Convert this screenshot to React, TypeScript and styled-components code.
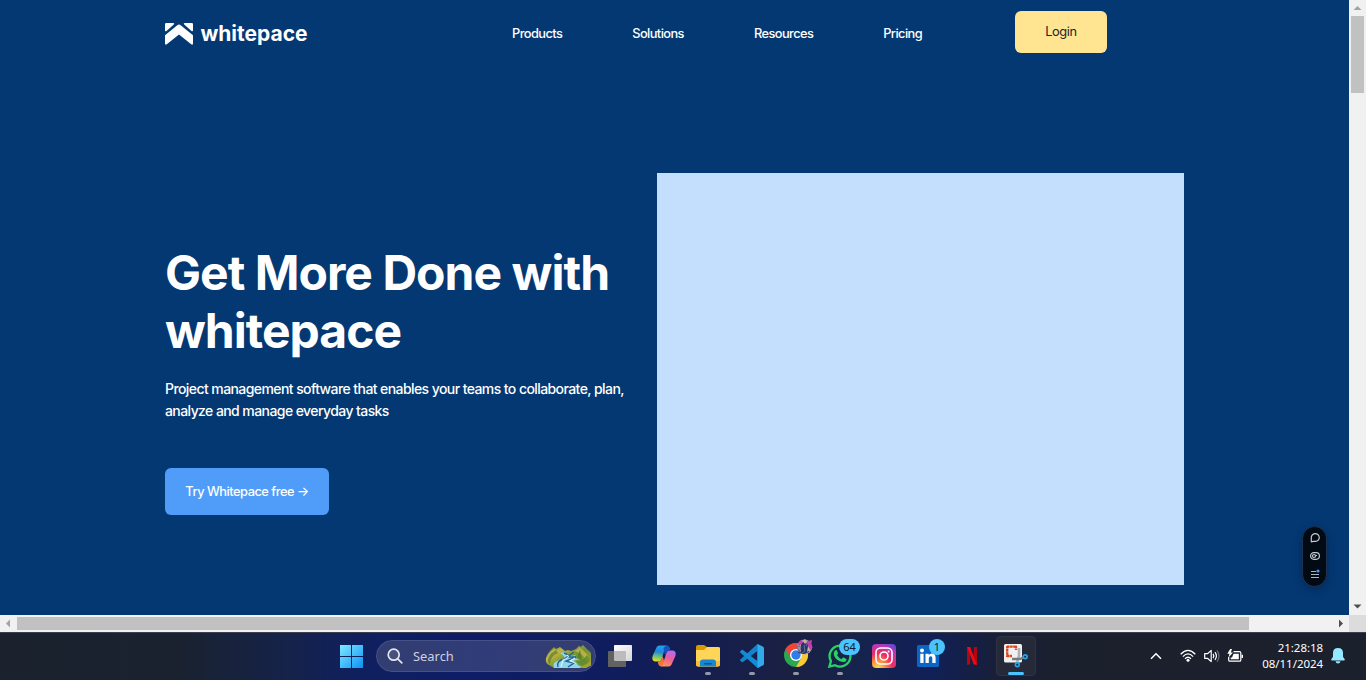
import React from "react";
import styled, { createGlobalStyle } from "styled-components";

const GlobalStyle = createGlobalStyle`
  * { box-sizing: border-box; }
  html, body { margin: 0; padding: 0; overflow: hidden; }
  body { font-family: Inter, "Liberation Sans", sans-serif; background: #043873; }
  a { color: inherit; text-decoration: none; }
  button { border: 0; padding: 0; font-family: inherit; }
  svg { display: block; }
`;

const Screen = styled.div`
  width: 1366px;
  height: 680px;
  display: flex;
  flex-direction: column;
  overflow: hidden;
`;

const Browser = styled.div`
  height: 632px;
  display: grid;
  grid-template: 615px 17px / 1349px 17px;
`;

const Page = styled.div`
  position: relative;
  background: #043873;
  color: #fff;
  padding-left: 165px;
`;

const Header = styled.header`
  height: 64px;
  display: flex;
  align-items: center;
`;

const Brand = styled.a`
  width: 347px;
  display: flex;
  align-items: center;
  gap: 7.4px;
  padding-top: 3px;
`;

const BrandName = styled.span`
  font-size: 21px;
  line-height: 26px;
  font-weight: 700;
  letter-spacing: 0;
`;

const Nav = styled.nav`
  width: 503px;
  display: flex;
  gap: 70px;
  padding-top: 4px;
  font-size: 12.8px;
  line-height: 20px;
  font-weight: 550;
  letter-spacing: -0.57px;
  white-space: nowrap;
`;

const LoginButton = styled.button`
  width: 92px;
  height: 42px;
  padding-bottom: 2px;
  border-radius: 6px;
  background: #ffe492;
  color: #212529;
  font-size: 12.8px;
  letter-spacing: -0.35px;
`;

const Hero = styled.main`
  display: flex;
  padding-top: 109px;
`;

const HeroCopy = styled.section`
  width: 492px;
  padding-top: 71px;
`;

const Title = styled.h1`
  margin: 0;
  font-size: 48px;
  line-height: 58px;
  font-weight: 700;
  letter-spacing: -0.96px;
`;

const Lead = styled.p`
  margin: 18px 0 0;
  font-size: 14px;
  line-height: 22px;
  font-weight: 550;
  letter-spacing: -0.58px;
  white-space: nowrap;
`;

const TryButton = styled.button`
  width: 164px;
  height: 47px;
  margin-top: 46px;
  border-radius: 6px;
  background: #4f9cf9;
  color: #fff;
  font-size: 12.8px;
  font-weight: 550;
  letter-spacing: -0.48px;
  white-space: nowrap;
`;

const HeroImage = styled.div`
  width: 527px;
  height: 412px;
  background: #c4defd;
`;

const Toolbox = styled.aside`
  position: absolute;
  right: 22px;
  top: 526px;
  width: 25px;
  height: 61px;
  padding-top: 5px;
  border: 1px solid #1c3252;
  border-radius: 13px;
  background: #020a14;
  box-shadow: 0 3px 10px rgba(0, 0, 0, 0.25);
  display: flex;
  flex-direction: column;
  align-items: center;
  gap: 6px;
`;

const VerticalBar = styled.div`
  background: #f1f1f1;
  display: flex;
  flex-direction: column;
  align-items: center;
  justify-content: space-between;
`;

const VerticalTrack = styled.div`
  flex: 1;
  width: 13px;
  margin-top: -1px;
`;

const VerticalThumb = styled.div`
  height: 77px;
  background: #c1c1c1;
`;

const HorizontalBar = styled.div`
  background: #f1f1f1;
  display: flex;
  align-items: center;
`;

const HorizontalTrack = styled.div`
  flex: 1;
`;

const HorizontalThumb = styled.div`
  width: 1232px;
  height: 13px;
  background: #c1c1c1;
`;

const Corner = styled.div`
  background: #dcdcdc;
`;

const Taskbar = styled.footer`
  height: 48px;
  border-top: 1px solid #3b3f50;
  background: linear-gradient(90deg, #1b222e 0, #1a2230 180px, #15224a 290px, #10205d 350px, #0e1d66 460px, #0f1d60 600px, #141e51 690px, #1a2042 790px, #16234b 850px, #112057 930px, #171f3c 990px, #1b202d 1060px, #1b212c 100%);
  display: flex;
  padding-left: 329px;
  font-family: "Noto Sans", "Open Sans", sans-serif;
  color: #fff;
`;

const TaskCell = styled.div`
  position: relative;
  width: 44px;
  height: 46px;
  display: flex;
  align-items: center;
  justify-content: center;
`;

const ChromeCell = styled(TaskCell)`
  padding: 0 0 6px 8px;
`;

const ActiveCell = styled(TaskCell)`
  width: 40px;
  height: 40px;
  margin: 3px 2px 0;
  border: 1px solid #303442;
  border-radius: 4px;
  background: #262a38;
`;

const Indicator = styled.span<{ $active?: boolean }>`
  position: absolute;
  left: 50%;
  bottom: ${(p) => (p.$active ? "0" : "4px")};
  width: ${(p) => (p.$active ? "16px" : "6px")};
  height: 3px;
  border-radius: 2px;
  background: ${(p) => (p.$active ? "#4cc2ff" : "#9598aa")};
  transform: translateX(-50%);
`;

const Badge = styled.span<{ $wide?: boolean }>`
  position: absolute;
  top: 6px;
  left: ${(p) => (p.$wide ? "21px" : "23px")};
  width: ${(p) => (p.$wide ? "21px" : "16px")};
  height: 16px;
  border-radius: 8px;
  background: #4cc2ff;
  color: #10202c;
  font-size: 11px;
  line-height: 16px;
  text-align: center;
`;

const SearchPill = styled.div`
  width: 220px;
  height: 32px;
  margin: 7px 2px 0 3px;
  padding: 0 4px 0 10px;
  border: 1px solid #46518a;
  border-radius: 16px;
  background: linear-gradient(90deg, #323d70, #303c79 50%, #353e70);
  display: flex;
  align-items: center;
`;

const SearchLabel = styled.span`
  flex: 1;
  padding-left: 10px;
  font-size: 12.9px;
  color: #cdd0df;
`;

const Tray = styled.div`
  display: flex;
  align-items: center;
  width: 216px;
  height: 46px;
  margin-left: 112px;
`;

const TrayIcons = styled.div`
  width: 95px;
  display: flex;
  align-items: center;
`;

const TraySlot = styled.span<{ $width: number }>`
  width: ${(p) => p.$width}px;
  flex: none;
`;

const Clock = styled.div`
  width: 78px;
  text-align: right;
  font-size: 11.5px;
  line-height: 16px;
  letter-spacing: -0.05px;
`;

const BellSlot = styled.span`
  margin-left: 8px;
`;

const BrandMark = () => (
  <svg width="28" height="22" viewBox="0 0 28 22" fill="#fff">
    <path d="M1.200 0H8.200Q10 0 8.800 1.500L1.800 7.700Q0 9 0 7V1.200Q0 0 1.200 0ZM26.800 0H19.800Q18 0 19.200 1.500L26.200 7.700Q28 9 28 7V1.200Q28 0 26.800 0Z" />
    <path d="M0 12.200 12.300 2.200Q14 1 15.700 2.200L28 12.200V20.300Q28 22.500 26.200 21.200L14 11.600 1.800 21.200Q0 22.500 0 20.300Z" />
  </svg>
);

const Arrow = ({ dir, dim }: { dir: "up" | "down" | "left" | "right"; dim?: boolean }) => {
  const paths = {
    up: "M4.5 10h8l-4-4z",
    down: "M4.5 6.5h8l-4 4z",
    left: "M10 4.5v8l-4-4z",
    right: "M7 4.5v8l4-4z",
  };
  return (
    <svg width="17" height="17" viewBox="0 0 17 17">
      <path d={paths[dir]} fill={dim ? "#a3a3a3" : "#505050"} />
    </svg>
  );
};

const ChatIcon = () => (
  <svg width="12" height="12" viewBox="0 0 12 12" fill="none" stroke="#c3c8ce" strokeWidth="1.2">
    <path d="M2.300 9.900V6A4 3.900 0 1 1 6.500 9.400H4.300Z" strokeLinejoin="round" />
  </svg>
);

const ToggleIcon = () => (
  <svg width="12" height="12" viewBox="0 0 12 12" fill="none" stroke="#c3c8ce" strokeWidth="1.200">
    <rect x="1.600" y="2.700" width="8.800" height="6.600" rx="3.200" />
    <circle cx="5" cy="6" r="1.500" />
    <path d="M6 5.500h2" />
  </svg>
);

const MenuIcon = () => (
  <svg width="12" height="12" viewBox="0 0 12 12">
    <path d="M2 3.500h5M2 6.500h8M2 9.500h8" stroke="#aeb4bc" strokeWidth="1.200" />
    <circle cx="9" cy="3" r="1.600" fill="#3d9cff" />
  </svg>
);

const WindowsIcon = () => (
  <svg width="24" height="24" viewBox="0 0 24 24">
    <defs>
      <linearGradient id="win" x1="0" y1="0" x2="1" y2="1">
        <stop stopColor="#7eeaff" />
        <stop offset="1" stopColor="#0b91f5" />
      </linearGradient>
    </defs>
    <path fill="url(#win)" d="M1 1h11v11H1zM13 1h11v11H13zM1 13h11v11H1zM13 13h11v11H13z" />
  </svg>
);

const SearchIcon = () => (
  <svg width="16" height="16" viewBox="0 0 16 16" fill="none" stroke="#e4e6f0" strokeWidth="1.700">
    <circle cx="6.700" cy="6.700" r="5.500" fill="#465180" />
    <path d="m10.800 10.800 4 4" strokeLinecap="round" />
  </svg>
);

const ValleyIcon = () => (
  <svg width="46" height="23" viewBox="0 0 46 23">
    <defs>
      <linearGradient id="hill" x1="0" y1="0" x2="1" y2="0.8">
        <stop stopColor="#347c25" />
        <stop offset=".3" stopColor="#c1b440" />
        <stop offset=".6" stopColor="#709334" />
        <stop offset="1" stopColor="#a8a236" />
      </linearGradient>
    </defs>
    <path d="M4 20Q0 18 1 13q1-4 4-7l4-4 2 2 4-2 5 4 3-1 3 1 5-2 3-3 2 1 2-2 5 5q5 4 5 10 0 4-3 6l-4 2H9z" fill="url(#hill)" />
    <path d="M3 18Q6 9 13 7L9 4Q1 10 3 18ZM30 6q9 3 12 11l3-3Q41 7 35 3Z" fill="#e3c157" opacity=".6" />
    <path d="M5 19q0-8 8-11l-2-3Q2 10 3 17ZM35 4l-3 10 5 1z" fill="#3d7423" opacity=".6" />
    <path d="M20 7q5 3 2 5l9-2-3 3 7 1-7 2q10 2 7 7H9q-3-6 6-8l5-2q-1-3-5-5z" fill="#8cd7eb" />
    <path d="M19 8q9 3 0 6-8 2-6 8M29 7l-7 5 9 0-10 4 8 2-6 4" fill="none" stroke="#23618d" strokeWidth="1.400" />
    <path d="M22 10q4 2-4 5l-2 7M30 13l-5 3 8 3" fill="none" stroke="#d9f6ff" strokeWidth="1.100" />
    <path d="M30 17q8-1 12-7l3 4q-2 7-11 7z" fill="#528927" opacity=".75" />
  </svg>
);

const TaskViewIcon = () => (
  <svg width="24" height="24" viewBox="0 0 24 24">
    <defs>
      <linearGradient id="paper" x1="0" y1="0" x2="1" y2="1">
        <stop stopColor="#fff" />
        <stop offset="1" stopColor="#d5d5d8" />
      </linearGradient>
    </defs>
    <rect x="6" y="1" width="18" height="16" rx=".8" fill="url(#paper)" />
    <rect y="7" width="18" height="16" rx=".8" fill="#626262" />
    <path d="M6 7h12v10H7q-1 0-1-1z" fill="#bcbcbc" />
  </svg>
);

const CopilotIcon = () => (
  <svg width="24" height="24" viewBox="0 0 24 24">
    <defs>
      <linearGradient id="cpa" x1=".5" y1="0" x2=".3" y2="1">
        <stop stopColor="#20a5ed" />
        <stop offset=".4" stopColor="#2385dc" />
        <stop offset=".7" stopColor="#63c777" />
        <stop offset="1" stopColor="#f4d823" />
      </linearGradient>
      <linearGradient id="cpb" x1=".7" y1="0" x2=".3" y2="1">
        <stop stopColor="#b06df2" />
        <stop offset=".45" stopColor="#ed5c9b" />
        <stop offset="1" stopColor="#ff994d" />
      </linearGradient>
    </defs>
    <path d="M14 1.500H7.500Q5 1.500 4 4.500L.8 11.500Q-1 17 3.500 17.500h3q2.500 0 3.300-3L12 7.500Q12.700 5 15.500 5h2.300Q17 1.500 14 1.500Z" fill="url(#cpa)" />
    <path d="M10 22.500h6.500q2.500 0 3.500-3l3.200-7Q25 7 20.500 6.500h-3q-2.500 0-3.300 3L12 16.500q-.7 2.500-3.500 2.500H6.200Q7 22.500 10 22.500Z" fill="url(#cpb)" />
    <path d="M14 1.500q3 0 3.800 3.500l.5 1.500h-.8q-2.500 0-3.300 3L13.500 12 12 7.500l-.5-3.500z" fill="#1751c4" />
    <path d="M10 22.500q-3 0-3.800-3.500l-.4-1.500h.7q2.500 0 3.300-3l.7-2.500L12 16.500z" fill="#f0763e" />
  </svg>
);

const FolderIcon = () => (
  <svg width="24" height="24" viewBox="0 0 24 24">
    <path d="M0 3q0-2 2-2h6l3 2h11q2 0 2 2v3H0z" fill="#d99a00" />
    <path d="M0 6h8l3-3h11.500Q24 3 24 4.500v16q0 2-2 2H2q-2 0-2-2z" fill="#ffd557" />
    <path d="M0 17h24v3.500q0 2-2 2H2q-2 0-2-2z" fill="#f7bd36" />
    <path d="M4 22.500V18.500q0-3 3-3h10q3 0 3 3v4z" fill="#1687d4" />
    <rect x="8" y="19" width="8" height="1.500" rx=".7" fill="#075193" />
  </svg>
);

const CodeIcon = () => (
  <svg width="24" height="24" viewBox="0 0 24 24">
    <path d="m17.500 0 5.200 2.400Q24 3 24 4.300v15.400q0 1.300-1.300 1.900L17.500 24z" fill="#30a9ed" />
    <path d="m17.500 0 .5 6.500L3 18q-.7.5-1.300 0L.3 16.800q-.6-.6 0-1.300z" fill="#1582cc" />
    <path d="m17.500 24 .5-6.500L3 6q-.7-.5-1.300 0L.3 7.200q-.6.600 0 1.300z" fill="#148bd5" />
    <path d="m17.500 0 1 .4V24l-1 0z" fill="#30a9ed" />
  </svg>
);

const ChromeIcon = () => (
  <svg width="32" height="30" viewBox="0 0 32 30">
    <circle cx="12" cy="17" r="12" fill="#29a751" />
    <path d="M1.600 11A12 12 0 0 1 22.400 11H12L6.800 20z" fill="#ed453a" />
    <path d="M22.400 11A12 12 0 0 1 12 29l5.200-9L12 11z" fill="#fcc934" />
    <circle cx="12" cy="17" r="6" fill="#fff" />
    <circle cx="12" cy="17" r="4.700" fill="#317ce9" />
    <circle cx="20.500" cy="9" r="7.500" fill="#a19aab" />
    <path d="m14 5 3-3 2 2 9-2-1 6 2 1-3 3-3-6-5-1-3 3z" fill="#c43cac" />
    <path d="m17 6 4-3 3 4 1 7-5 2-6-1 3-4z" fill="#263669" />
    <path d="m19 3 2-2 2 3-2 2zm-4 8 2 1-1 3zM24 8l2 4-3 2z" fill="#d3b0a8" />
    <path d="m13 8 4 1-2 5zm7-1 1 6-3 2M24 4l-2 4" stroke="#68718d" fill="none" />
  </svg>
);

const WhatsappIcon = () => (
  <svg width="24" height="24" viewBox="0 0 24 24">
    <path d="m1.400 22.600 1.500-5.500A10.400 10.400 0 1 1 7 21.200z" fill="none" stroke="#27d366" strokeWidth="2.300" />
    <path d="M8.800 6.200 10 9.100q.2.500-.1.900l-1 1.100q1.800 3 4.600 4.100l1.200-1.500q.4-.5.9-.2l2.700 1.400q.6.300.3 1-.9 2.400-3.700 2.200Q8 16.800 6 11.400 5.100 8 7.500 6.200q.8-.5 1.300 0Z" fill="#27d366" />
  </svg>
);

const InstagramIcon = () => (
  <svg width="24" height="24" viewBox="0 0 24 24">
    <defs>
      <radialGradient id="insta" cx=".25" cy="1" r="1.1">
        <stop stopColor="#ffdc55" />
        <stop offset=".25" stopColor="#ff963d" />
        <stop offset=".55" stopColor="#ec2e62" />
        <stop offset=".85" stopColor="#bf36b0" />
        <stop offset="1" stopColor="#7044d4" />
      </radialGradient>
    </defs>
    <rect width="24" height="24" rx="4" fill="url(#insta)" />
    <rect x="4" y="4" width="16" height="16" rx="4.500" fill="none" stroke="#fff" strokeWidth="1.600" />
    <circle cx="12" cy="12" r="4" fill="none" stroke="#fff" strokeWidth="1.600" />
    <circle cx="16.600" cy="7.400" r="1" fill="#fff" />
  </svg>
);

const LinkedinIcon = () => (
  <svg width="24" height="24" viewBox="0 0 24 24">
    <rect x="1" y="1" width="22" height="22" rx="1.500" fill="#0a66c2" />
    <circle cx="6" cy="6.500" r="2" fill="#fff" />
    <path d="M4.300 9.700h3.300V19H4.300zM9.500 9.700h3.200V11q1-1.600 3.100-1.600 3.800 0 3.800 4.300V19h-3.300v-4.800q0-2-1.500-2-2 0-2 2.300V19H9.500z" fill="#fff" />
  </svg>
);

const NetflixIcon = () => (
  <svg width="10" height="18" viewBox="0 0 10 18">
    <path d="M0 0h3.200v17.300L0 18zM6.800 0H10v18l-3.200-.7z" fill="#b20710" />
    <path d="M0 0h3.200L10 18l-3.300-.7z" fill="#ed0b17" />
  </svg>
);

const SnipIcon = () => (
  <svg width="26" height="26" viewBox="0 0 26 26">
    <rect x="1" y="1" width="18" height="18.500" rx="1.500" fill="#f0f0f2" />
    <path d="M4 3.700h10M4.200 3v11M4 13h5M13 3v4" fill="none" stroke="#d84516" strokeWidth="2.300" strokeDasharray="2.600 .5" />
    <path d="M16 5v8l-2 6" fill="none" stroke="#aeb2b6" strokeWidth="2.600" />
    <path d="M9 16h8l4-2" fill="none" stroke="#747b82" strokeWidth="2.500" />
    <circle cx="22.200" cy="13.700" r="1.900" fill="#102a40" stroke="#2aa4e6" strokeWidth="1.700" />
    <circle cx="14.300" cy="21.700" r="1.900" fill="#102a40" stroke="#2aa4e6" strokeWidth="1.700" />
  </svg>
);

const ChevronIcon = () => (
  <svg width="12" height="8" viewBox="0 0 12 8" fill="none" stroke="#fff" strokeWidth="1.500">
    <path d="m1 6.700 5-5 5 5" />
  </svg>
);

const WifiIcon = () => (
  <svg width="16" height="14" viewBox="0 0 16 14" fill="none" stroke="#fff" strokeWidth="1.300">
    <path d="M.7 5.200Q8-2.300 15.300 5.200M2.900 7.600Q8 2.200 13.100 7.600M5 9.800q3-3 6 0" />
    <circle cx="8" cy="11.300" r="1.500" fill="#fff" stroke="none" />
  </svg>
);

const SpeakerIcon = () => (
  <svg width="16" height="14" viewBox="0 0 16 14" fill="none" stroke="#fff" strokeWidth="1.200">
    <path d="M.7 4.700h2.800L7.200 1.400v11.200L3.500 9.300H.7z" strokeLinejoin="round" />
    <path d="M9.100 4.900q1.400 2.100 0 4.200M11 3.200q2.800 3.800 0 7.600" />
    <path d="M13 1.300q4.100 5.700 0 11.400" stroke="#6c717b" />
  </svg>
);

const BatteryIcon = () => (
  <svg width="17" height="14" viewBox="0 0 17 14">
    <path d="M6.500 2.600h6q1.300 0 1.300 1.300v7q0 1.300-1.300 1.300h-9.500q-1.300 0-1.300-1.300V8" fill="none" stroke="#fff" strokeWidth="1.200" />
    <path d="M6.500 4.700h5.300v5.500H3.700V8.500H5z" fill="#fff" />
    <path d="M14.500 5.800H16v3.300h-1.500z" fill="#fff" />
    <path d="M3.200 0 .3 4.700h2.200L1.500 8.500 6 3.500H3.800L5 0z" fill="#fff" />
  </svg>
);

const BellIcon = () => (
  <svg width="14" height="16" viewBox="0 0 14 16" fill="#94e8ff">
    <path d="M7 0q5 0 5 5v3.800l1.700 2.500q.5 1.200-.8 1.200H1.100q-1.300 0-.8-1.200L2 8.800V5q0-5 5-5ZM4.500 13.300h5Q9 15.500 7 15.500t-2.500-2.200Z" />
  </svg>
);

export default function App() {
  return (
    <>
      <GlobalStyle />
      <Screen>
        <Browser>
          <Page>
            <Header>
              <Brand href="#">
                <BrandMark />
                <BrandName>whitepace</BrandName>
              </Brand>
              <Nav>
                {["Products", "Solutions", "Resources", "Pricing"].map((item) => (
                  <a href="#" key={item}>{item}</a>
                ))}
              </Nav>
              <LoginButton>Login</LoginButton>
            </Header>
            <Hero>
              <HeroCopy>
                <Title>Get More Done with<br />whitepace</Title>
                <Lead>
                  Project management software that enables your teams to collaborate, plan,
                  <br />
                  analyze and manage everyday tasks
                </Lead>
                <TryButton>Try Whitepace free →</TryButton>
              </HeroCopy>
              <HeroImage />
            </Hero>
            <Toolbox>
              <ChatIcon />
              <ToggleIcon />
              <MenuIcon />
            </Toolbox>
          </Page>
          <VerticalBar>
            <Arrow dir="up" dim />
            <VerticalTrack><VerticalThumb /></VerticalTrack>
            <Arrow dir="down" />
          </VerticalBar>
          <HorizontalBar>
            <Arrow dir="left" dim />
            <HorizontalTrack><HorizontalThumb /></HorizontalTrack>
            <Arrow dir="right" />
          </HorizontalBar>
          <Corner />
        </Browser>
        <Taskbar>
          <TaskCell><WindowsIcon /></TaskCell>
          <SearchPill>
            <SearchIcon />
            <SearchLabel>Search</SearchLabel>
            <ValleyIcon />
          </SearchPill>
          <TaskCell><TaskViewIcon /></TaskCell>
          <TaskCell><CopilotIcon /></TaskCell>
          <TaskCell><FolderIcon /><Indicator /></TaskCell>
          <TaskCell><CodeIcon /><Indicator /></TaskCell>
          <ChromeCell><ChromeIcon /><Indicator /></ChromeCell>
          <TaskCell><WhatsappIcon /><Badge $wide>64</Badge><Indicator /></TaskCell>
          <TaskCell><InstagramIcon /></TaskCell>
          <TaskCell><LinkedinIcon /><Badge>1</Badge></TaskCell>
          <TaskCell><NetflixIcon /></TaskCell>
          <ActiveCell><SnipIcon /><Indicator $active /></ActiveCell>
          <Tray>
            <TrayIcons>
              <TraySlot $width={30}><ChevronIcon /></TraySlot>
              <TraySlot $width={24}><WifiIcon /></TraySlot>
              <TraySlot $width={23}><SpeakerIcon /></TraySlot>
              <TraySlot $width={18}><BatteryIcon /></TraySlot>
            </TrayIcons>
            <Clock>21:28:18<br />08/11/2024</Clock>
            <BellSlot><BellIcon /></BellSlot>
          </Tray>
        </Taskbar>
      </Screen>
    </>
  );
}
